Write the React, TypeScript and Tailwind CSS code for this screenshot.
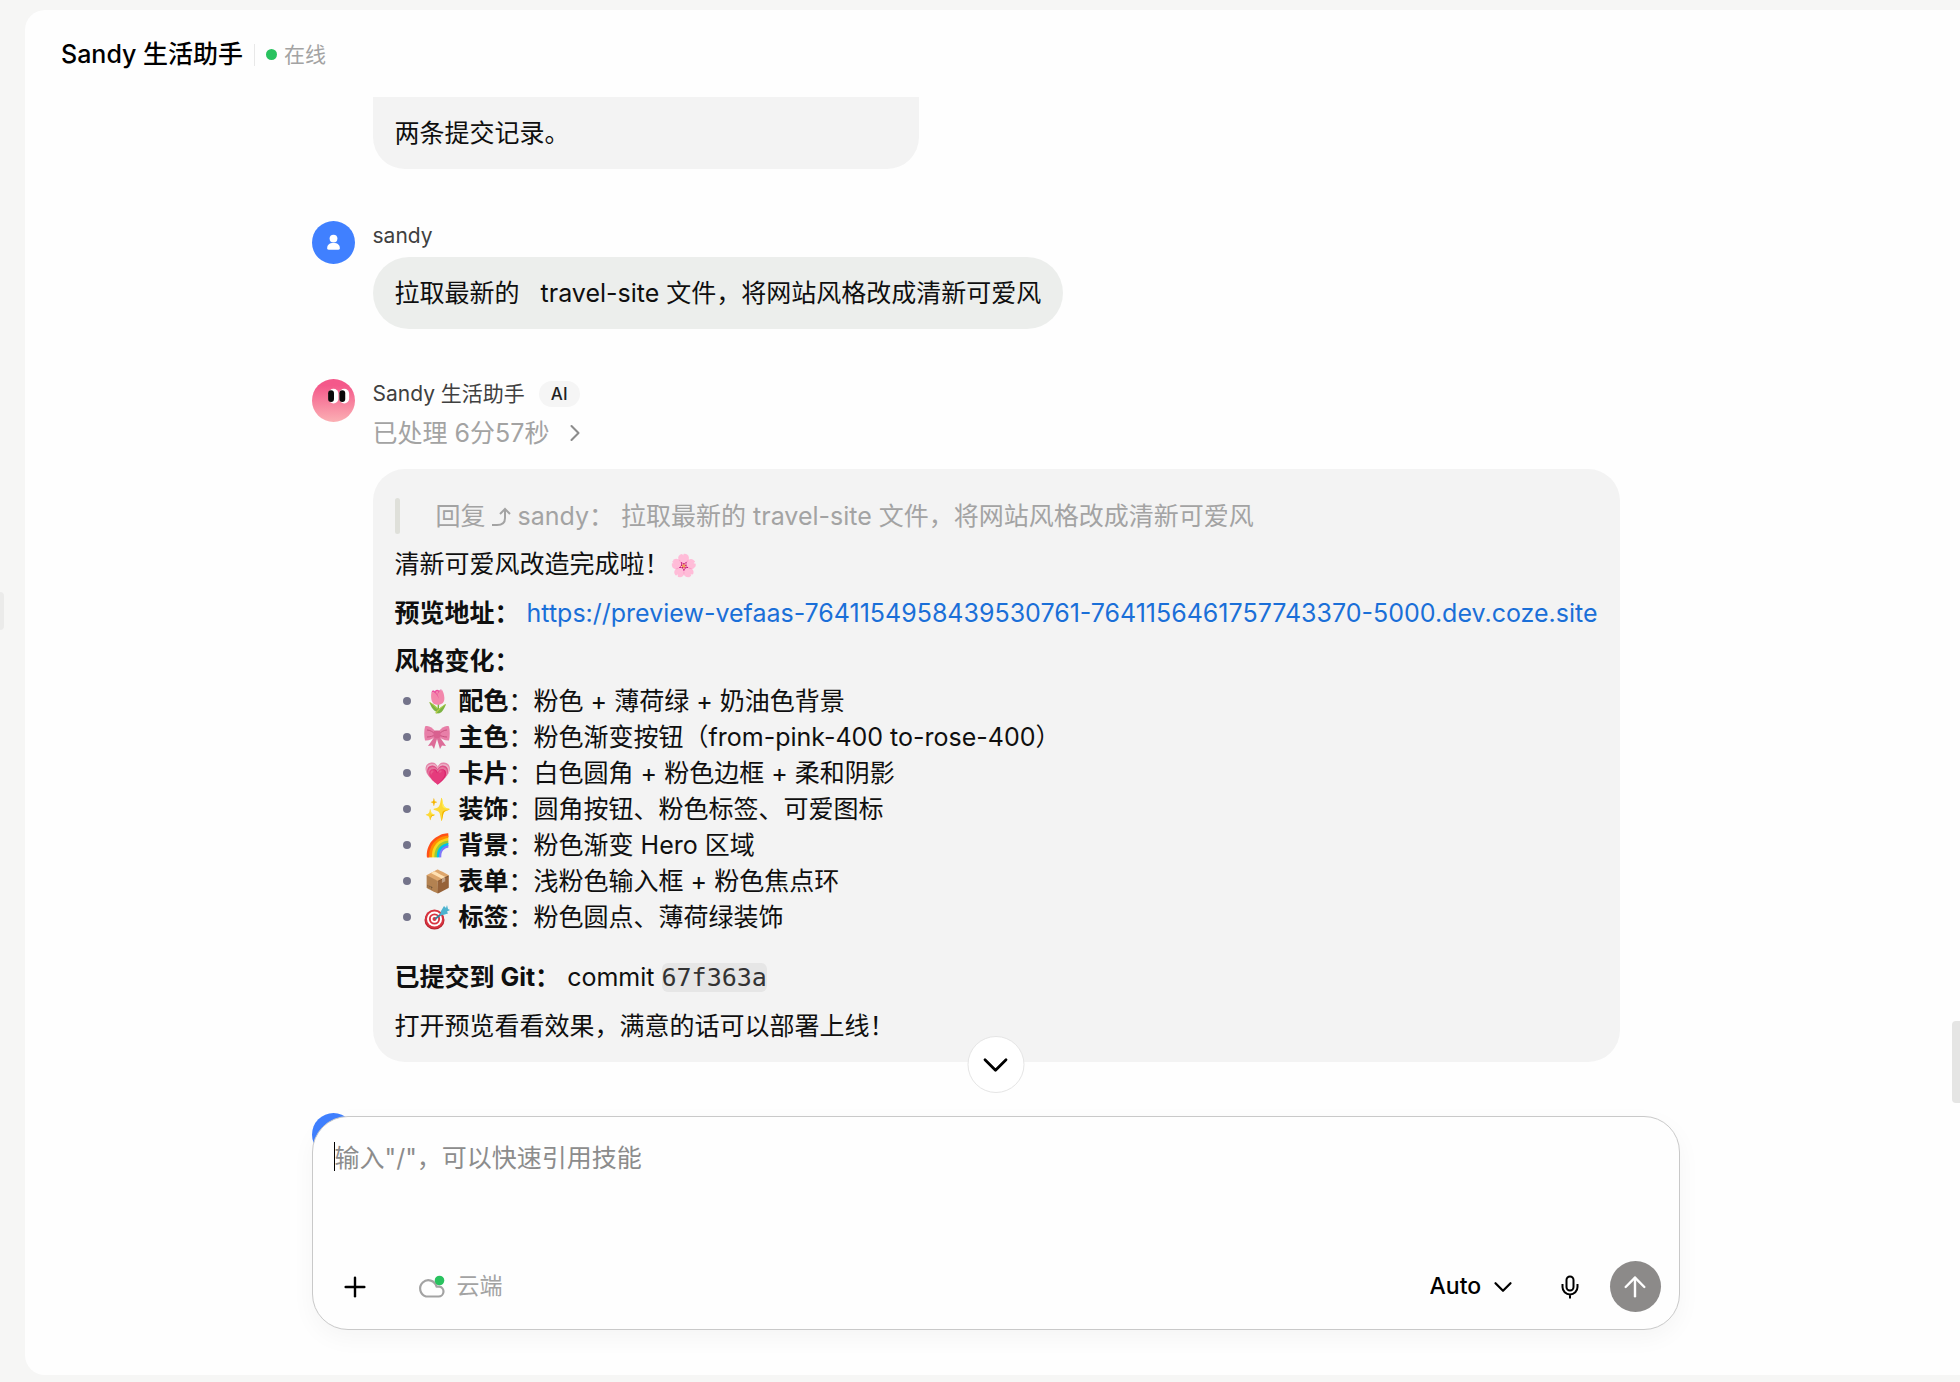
import type { ReactNode } from 'react'
import { ArrowUp, ChevronDown, ChevronRight, Plus } from 'lucide-react'

const PREVIEW_URL = 'https://preview-vefaas-7641154958439530761-7641156461757743370-5000.dev.coze.site'

function BowIcon() {
  return (
    <svg viewBox="0 0 26 26" className="size-[26px]" aria-hidden="true">
      <path d="M11 12 4 22l4-.5 2 3.500 3-10 3 10 2-3.500 4 .5-7-10z" fill="#dd6c98" />
      <path d="M12 8C8 3 4 1 1 2.500c-1 4-1 10 0 14 4 .5 8-2 11-4z" fill="#e87fa8" />
      <path d="M14 8c4-5 8-7 11-5.500 1 4 1 10 0 14-4 .5-8-2-11-4z" fill="#e87fa8" />
      <path d="M3 6c3 0 6 2 8 4M3 13c3 0 6-1 8-2M23 6c-3 0-6 2-8 4M23 13c-3 0-6-1-8-2" stroke="#c9527f" fill="none" />
      <rect x="9.500" y="6.500" width="7" height="7.500" rx="2" fill="#d9608f" />
    </svg>
  )
}

function DartIcon() {
  return (
    <svg viewBox="0 0 26 26" className="size-[26px]" aria-hidden="true">
      <ellipse cx="10.5" cy="16" rx="10" ry="9.5" fill="#b3202c" />
      <circle cx="10.5" cy="15" r="9.5" fill="#d8333f" />
      <circle cx="10.5" cy="15" r="7.5" fill="#fff" />
      <circle cx="10.5" cy="15" r="5.6" fill="#d8333f" />
      <circle cx="10.5" cy="15" r="3.7" fill="#fff" />
      <circle cx="10.5" cy="15" r="2" fill="#d8333f" />
      <path d="m11 15 9-7" stroke="#3b7f99" strokeWidth="2" />
      <path d="m17 7 3-5 2 2 1-3 1 4 2 1-3 1.500 1 2-5 1.500-3 .5z" fill="#4db3cf" />
    </svg>
  )
}

function ReplyArrow() {
  return (
    <svg viewBox="0 0 20 20" className="mx-[6px] inline-block size-5 align-[-2px]" fill="none" stroke="currentColor" strokeWidth="2" aria-hidden="true">
      <path d="M0 18h5c5 0 8-2 8-7V2M8 7l5-5 5 5" />
    </svg>
  )
}

function CloudIcon() {
  return (
    <svg viewBox="0 0 28 24" className="h-6 w-7" fill="none" aria-hidden="true">
      <path
        d="M9 21.500h12.500a5 5 0 0 0 1-9.900h-3A8.300 8.300 0 1 0 9 21.500z"
        stroke="#a3a3a3"
        strokeWidth="2.200"
        strokeLinejoin="round"
      />
      <circle cx="22.500" cy="5.500" r="4.800" fill="#29c25f" />
    </svg>
  )
}

function MicIcon() {
  return (
    <svg viewBox="0 0 24 24" className="size-6" fill="none" stroke="currentColor" strokeWidth="2" aria-hidden="true">
      <rect x="8.500" y="1.500" width="7" height="14" rx="3.500" />
      <path d="M4.500 9v3a7.500 7.500 0 0 0 15 0V9M12 19.500v4" />
    </svg>
  )
}

function UserAvatar() {
  return (
    <svg viewBox="0 0 44 44" className="size-[43px] shrink-0" aria-label="sandy">
      <circle cx="22" cy="22" r="22" fill="#4080ff" />
      <circle cx="22" cy="18" r="4" fill="#fff" />
      <path d="M15.500 28c0-3.500 2-5.500 6.500-5.500s6.500 2 6.500 5.500c0 1-.5 1.500-1.500 1.500H17c-1 0-1.500-.5-1.500-1.500z" fill="#fff" />
    </svg>
  )
}

function BotAvatar() {
  return (
    <svg viewBox="0 0 44 44" className="size-[43px] shrink-0" aria-label="Sandy 生活助手">
      <defs>
        <linearGradient id="face" x1="0" y1="0" x2="0" y2="1">
          <stop offset="0.150" stopColor="#f4588a" />
          <stop offset="1" stopColor="#fbb0b4" />
        </linearGradient>
      </defs>
      <circle cx="22" cy="22" r="22" fill="url(#face)" />
      <rect x="17" y="10" width="10" height="15" rx="5" fill="#fff" />
      <rect x="28" y="10" width="10" height="15" rx="5" fill="#fff" />
      <rect x="16.500" y="11.500" width="6" height="12" rx="3" fill="#0a0a0a" />
      <rect x="28" y="11.500" width="6" height="12" rx="3" fill="#0a0a0a" />
    </svg>
  )
}

const changes: { icon: ReactNode; name: string; text: string }[] = [
  { icon: '🌷', name: '配色', text: '粉色 + 薄荷绿 + 奶油色背景' },
  { icon: <BowIcon />, name: '主色', text: '粉色渐变按钮（from-pink-400 to-rose-400）' },
  { icon: '💗', name: '卡片', text: '白色圆角 + 粉色边框 + 柔和阴影' },
  { icon: '✨', name: '装饰', text: '圆角按钮、粉色标签、可爱图标' },
  { icon: '🌈', name: '背景', text: '粉色渐变 Hero 区域' },
  { icon: '📦', name: '表单', text: '浅粉色输入框 + 粉色焦点环' },
  { icon: <DartIcon />, name: '标签', text: '粉色圆点、薄荷绿装饰' },
]

function Header() {
  return (
    <header className="flex h-[87px] items-center pt-[2px] pl-9">
      <h1 className="text-[25px] font-medium text-black">Sandy 生活助手</h1>
      <span className="ml-[11px] h-[22px] w-px bg-[#e8e8e8]" />
      <span className="ml-[11px] size-[11px] rounded-full bg-[#29c25f]" />
      <span className="ml-[7px] text-[21px] text-[#a3a3a3]">在线</span>
    </header>
  )
}

function Reply() {
  return (
    <article className="w-fit rounded-[32px] bg-[#f3f3f3] px-[22px] pt-[29px] pb-[18px]">
      <blockquote className="flex text-[#a3a3a3]">
        <span className="mr-[36px] w-[5px] rounded-sm bg-[#dfe0da]" />
        <p>
          回复
          <ReplyArrow />
          sandy： 拉取最新的 travel-site 文件，将网站风格改成清新可爱风
        </p>
      </blockquote>
      <p className="mt-3">
        清新可爱风改造完成啦！<span className="text-[22px]">🌸</span>
      </p>
      <p className="mt-3">
        <strong>预览地址：</strong>{' '}
        <a href={PREVIEW_URL} className="text-[#1a6fd8]">
          {PREVIEW_URL}
        </a>
      </p>
      <p className="mt-3">
        <strong>风格变化：</strong>
      </p>
      <ul className="mt-1">
        {changes.map((item) => (
          <li key={item.name} className="flex items-center">
            <span className="mr-[13px] ml-2 size-2 rounded-full bg-[#73738a]" />
            <span className="mr-[7px] w-7 text-[22px]">{item.icon}</span>
            <span>
              <strong>{item.name}</strong>：{item.text}
            </span>
          </li>
        ))}
      </ul>
      <p className="mt-6">
        <strong>已提交到 Git：</strong> commit{' '}
        <code className='rounded-md bg-[#e6e6e6] font-["DejaVu_Sans_Mono",monospace] text-[#333333]'>67f363a</code>
      </p>
      <p className="mt-3">打开预览看看效果，满意的话可以部署上线！</p>
    </article>
  )
}

function Messages() {
  return (
    <div className="text-[25px] leading-[36px] text-[#0f0f0f]">
      <div className="ml-[61px] w-[546px] rounded-b-[32px] bg-[#f3f3f3] px-[22px] py-[18px]">两条提交记录。</div>

      <section className="mt-[52px] flex gap-[18px]">
        <UserAvatar />
        <div>
          <h2 className="text-[21px] leading-[30px] text-[#404040]">sandy</h2>
          <p className="mt-[6px] w-fit rounded-[36px] bg-[#eceeec] px-[22px] py-[18px] whitespace-pre-wrap">
            {'拉取最新的   travel-site 文件，将网站风格改成清新可爱风'}
          </p>
        </div>
      </section>

      <section className="mt-[50px] flex gap-[18px]">
        <BotAvatar />
        <div>
          <div className="flex items-center gap-[14px]">
            <h2 className="text-[21px] leading-[30px] text-[#404040]">Sandy 生活助手</h2>
            <span className="rounded-full bg-[#f5f5f5] px-3 text-[17px] leading-[26px] font-medium text-[#1f1f1f]">AI</span>
          </div>
          <button type="button" className="mt-[6px] mb-[18px] flex items-center gap-3 text-[#a3a3a3]">
            已处理 6分57秒
            <ChevronRight size={28} strokeWidth={1.8} className="text-[#8c8c8c]" />
          </button>
          <Reply />
        </div>
      </section>
    </div>
  )
}

function Composer() {
  return (
    <div className="relative">
      <div className="absolute -top-[3px] left-0">
        <UserAvatar />
      </div>
      <form className="relative rounded-[36px] border border-[#c9c9c9] bg-[#fefefe] pt-[23px] pb-[17px] shadow-[0_8px_24px_rgba(0,0,0,0.04)]">
        <div className="flex px-[21px]">
          <span className="mt-[2px] h-[29px] w-px bg-black" />
          <textarea
            aria-label="消息"
            rows={3}
            placeholder={'输入"/"，可以快速引用技能'}
            className="block h-[121px] flex-1 resize-none bg-transparent text-[25px] leading-[36px] outline-none placeholder:text-[#8c8c8c]"
          />
        </div>
        <div className="flex items-center pr-[18px] pl-[17px]">
          <button type="button" aria-label="添加" className="flex size-[50px] items-center justify-center">
            <Plus size={32} strokeWidth={1.8} />
          </button>
          <button type="button" className="ml-[37px] flex items-center gap-3 text-[23px] text-[#a3a3a3]">
            <CloudIcon />
            云端
          </button>
          <label className="ml-auto flex items-center">
            <select aria-label="模型" className="w-[58px] appearance-none bg-transparent text-[23px] font-medium text-black outline-none">
              <option>Auto</option>
            </select>
            <ChevronDown size={30} strokeWidth={1.8} />
          </label>
          <button type="button" aria-label="语音" className="ml-[40px]">
            <MicIcon />
          </button>
          <button type="submit" aria-label="发送" className="ml-7 flex size-[51px] items-center justify-center rounded-full bg-[#8c8a89] text-white">
            <ArrowUp size={32} strokeWidth={1.8} />
          </button>
        </div>
      </form>
    </div>
  )
}

export default function App() {
  return (
    <div className='relative flex min-h-screen bg-[#f6f6f5] pt-[10px] pb-2 pl-[25px] font-["Inter","Noto_Sans_CJK_SC",sans-serif]'>
      <div className="absolute top-[592px] left-0 h-[38px] w-1 rounded-r bg-[#ebebea]" />
      <main className="flex flex-1 flex-col rounded-l-[20px] bg-[#fefefe]">
        <Header />
        <div className="mx-auto flex w-full max-w-[1374px] flex-1 flex-col pb-[45px] pl-[6px]">
          <Messages />
          <div className="relative mt-auto pt-[54px]">
            <button
              type="button"
              aria-label="滚动到底部"
              className="absolute top-[-26px] left-1/2 flex size-[57px] -translate-x-1/2 items-center justify-center rounded-full border border-[#e5e5e5] bg-white"
            >
              <ChevronDown size={42} strokeWidth={1.6} />
            </button>
            <Composer />
          </div>
        </div>
      </main>
      <div className="absolute top-[1021px] right-0 h-[82px] w-2 rounded-l bg-[#e5e5e4]" />
    </div>
  )
}
